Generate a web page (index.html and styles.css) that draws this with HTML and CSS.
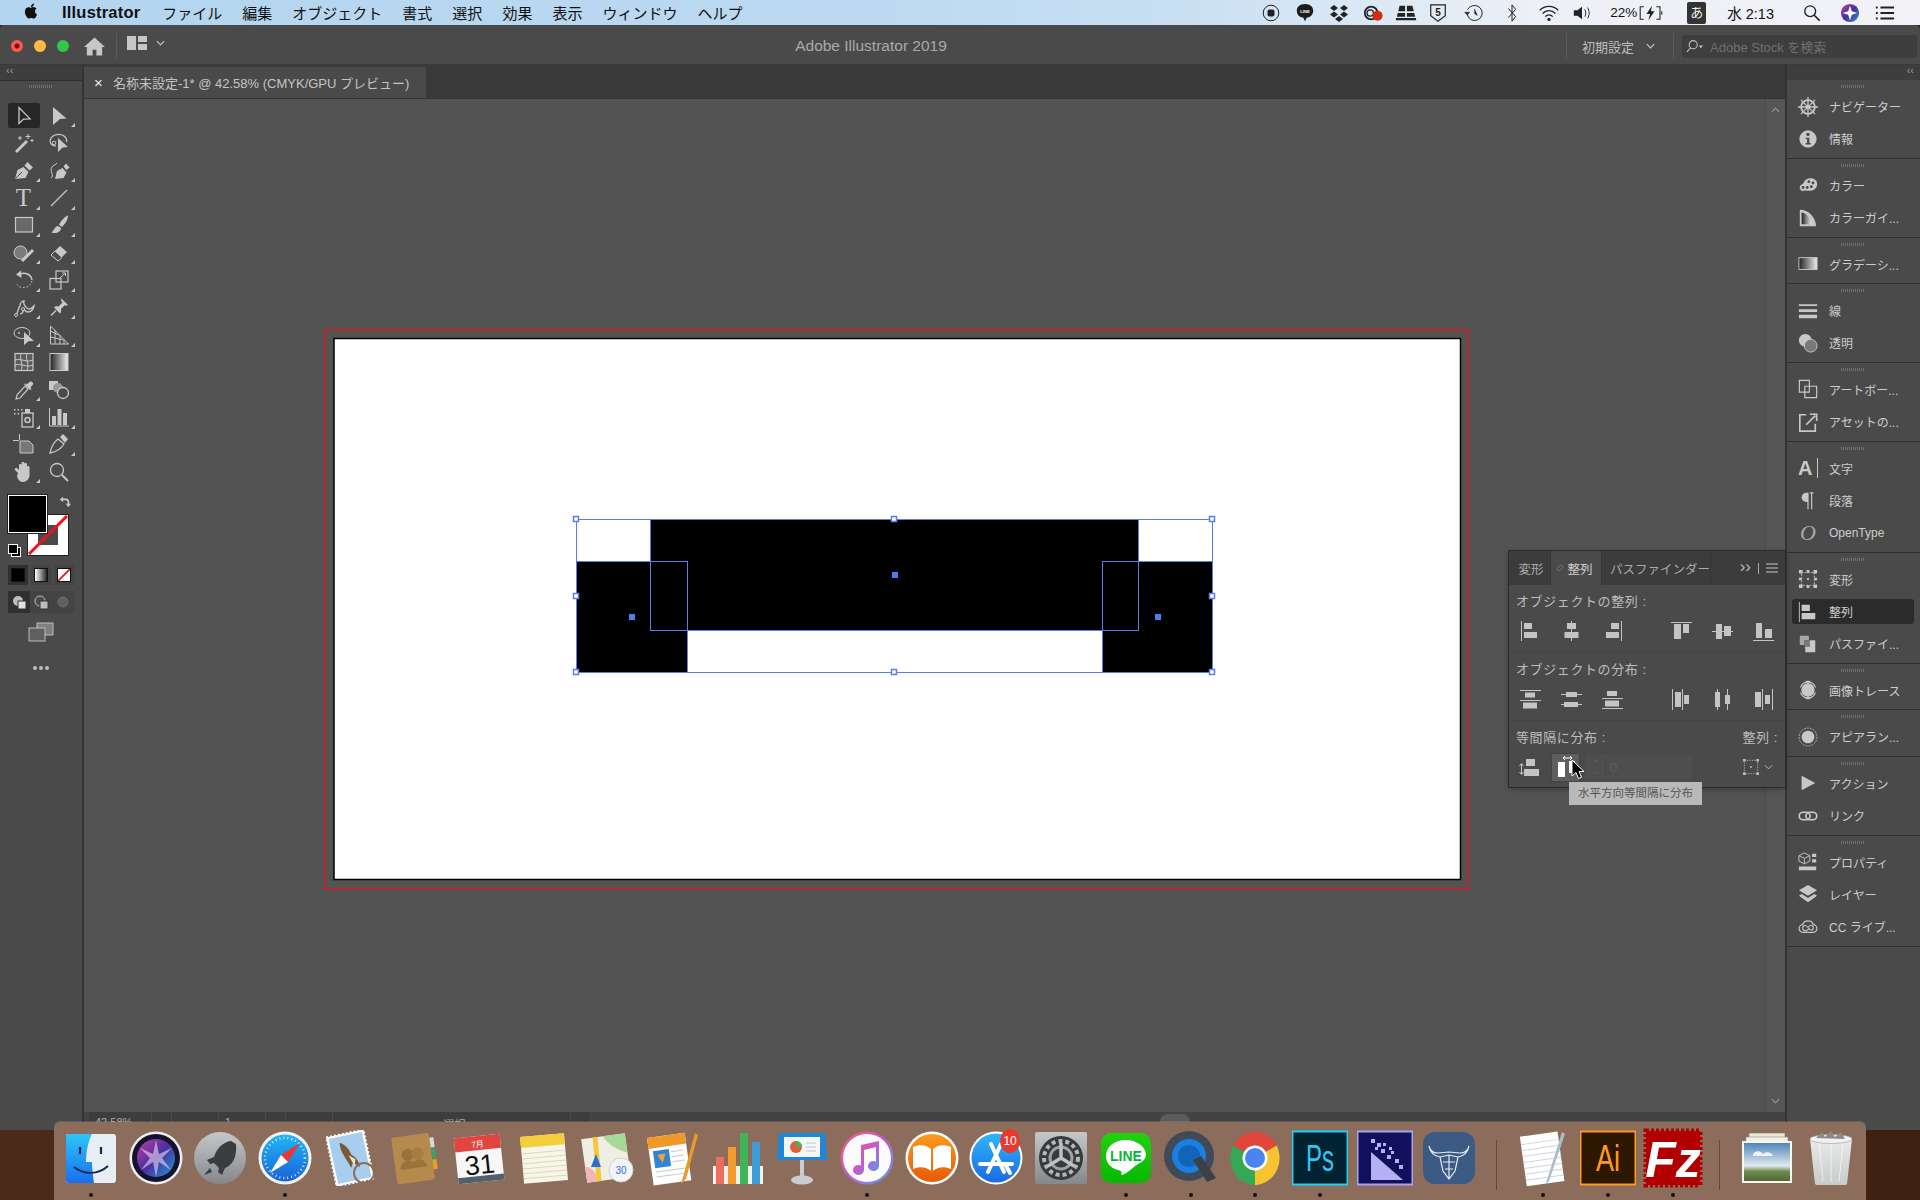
FILE: index.html
```html
<!DOCTYPE html>
<html lang="ja">
<head>
<meta charset="utf-8">
<title>Adobe Illustrator 2019</title>
<link rel="stylesheet" href="styles.css">
</head>
<body>
<svg class="defs" aria-hidden="true">
<defs>
<linearGradient id="gBW" x1="0" x2="1" y1="0" y2="0"><stop offset="0" stop-color="#222"/><stop offset="1" stop-color="#eee"/></linearGradient>
<linearGradient id="gWB" x1="0" x2="1" y1="0" y2="0"><stop offset="0" stop-color="#fff"/><stop offset="1" stop-color="#222"/></linearGradient>
<linearGradient id="gFinder" x1="0" x2="0" y1="0" y2="1"><stop offset="0" stop-color="#2fc4f7"/><stop offset="1" stop-color="#1a6ef0"/></linearGradient>
<linearGradient id="gSafari" x1="0" x2="0" y1="0" y2="1"><stop offset="0" stop-color="#1fb7f5"/><stop offset="1" stop-color="#1a62d8"/></linearGradient>
<linearGradient id="gSiri" x1="0" x2="1" y1="0" y2="1"><stop offset="0" stop-color="#c03ea8"/><stop offset=".5" stop-color="#4a2f9e"/><stop offset="1" stop-color="#1f9bd8"/></linearGradient>
<linearGradient id="gGray" x1="0" x2="0" y1="0" y2="1"><stop offset="0" stop-color="#c6c7c9"/><stop offset="1" stop-color="#85878b"/></linearGradient>
<linearGradient id="gMusic" x1="0" x2="1" y1="0" y2="1"><stop offset="0" stop-color="#fb5c74"/><stop offset=".5" stop-color="#c45ad0"/><stop offset="1" stop-color="#4ca3f5"/></linearGradient>
<linearGradient id="gBooks" x1="0" x2="0" y1="0" y2="1"><stop offset="0" stop-color="#fb9a1d"/><stop offset="1" stop-color="#e85a08"/></linearGradient>
<linearGradient id="gStore" x1="0" x2="0" y1="0" y2="1"><stop offset="0" stop-color="#2fb6f8"/><stop offset="1" stop-color="#1c6ae6"/></linearGradient>
<linearGradient id="gLine" x1="0" x2="0" y1="0" y2="1"><stop offset="0" stop-color="#1fd20e"/><stop offset="1" stop-color="#06b800"/></linearGradient>
<linearGradient id="gSky" x1="0" x2="0" y1="0" y2="1"><stop offset="0" stop-color="#4f86b8"/><stop offset=".6" stop-color="#dfe9ee"/><stop offset=".75" stop-color="#6f8a4c"/><stop offset="1" stop-color="#4e6a34"/></linearGradient>
<linearGradient id="gTrash" x1="0" x2="0" y1="0" y2="1"><stop offset="0" stop-color="#e8eaea"/><stop offset="1" stop-color="#c9cbcb"/></linearGradient>

<symbol id="t-sel" viewBox="0 0 22 22"><path d="M6 2.500v16l4.500-4.400 6.500-.3z" fill="#252525" stroke="#c8c8c8" stroke-width="1.300"/></symbol>
<symbol id="t-dsel" viewBox="0 0 22 22"><path d="M5 2l13.500 11.500-6.500.4L5 20z" fill="#c8c8c8"/></symbol>
<symbol id="t-wand" viewBox="0 0 22 22"><path d="M3 20L14 9" stroke="#c8c8c8" stroke-width="2.800" fill="none"/><path d="M15 2v5M12.500 4.500h5M7 4v4M5 6h4M19 7v3M17.500 8.500h3" stroke="#c8c8c8" fill="none"/></symbol>
<symbol id="t-lasso" viewBox="0 0 22 22"><path d="M8 14C3 14 1 10 2.500 7 4.500 2.500 12 1 16 4c2 1.500 3 4 2.500 6" stroke="#c8c8c8" stroke-width="1.200" fill="none"/><circle cx="6" cy="11" r="1.800" fill="none" stroke="#c8c8c8"/><path d="M10 6l10 9-5.500.4L10 20z" fill="#c8c8c8"/></symbol>
<symbol id="t-pen" viewBox="0 0 22 22"><path d="M2 20l2.500-9 6-3 5 5-3 6zM11.500 6.500l3-3.500 5.500 5.500-3.500 3z" fill="#c8c8c8"/><path d="M2.500 19.500L9 13" stroke="#4a4a4a"/></symbol>
<symbol id="t-curv" viewBox="0 0 22 22"><path d="M7 20l2-8 5.500-3 4 4.500-3 5.500zM15.500 7.500l2.500-3 3.500 4-3 2.500z" fill="#c8c8c8"/><path d="M3 19c4-2-2-7 1-11 1-2 4-2 5-4" stroke="#c8c8c8" fill="none"/></symbol>
<symbol id="t-line" viewBox="0 0 22 22"><path d="M3 19L19 3" stroke="#c8c8c8" stroke-width="1.300"/></symbol>
<symbol id="t-rect" viewBox="0 0 22 22"><rect x="2.500" y="3.500" width="17" height="14.500" fill="#6a6768" stroke="#c8c8c8" stroke-width="1.200"/></symbol>
<symbol id="t-brush" viewBox="0 0 22 22"><path d="M20 1.500c-3 1-7 5-9 9.500l3 2C17 10 20 6 20 1.500zM10 12c-3 0-3.500 4-6.500 6.500C8 20 12.500 18.500 13 14z" fill="#c8c8c8"/></symbol>
<symbol id="t-shaper" viewBox="0 0 22 22"><circle cx="7.500" cy="10.500" r="6.500" fill="#7c7a7a" stroke="#c8c8c8"/><path d="M9 19l11-11" stroke="#c8c8c8" stroke-width="3"/></symbol>
<symbol id="t-eraser" viewBox="0 0 22 22"><path d="M3 13L12 4l7 6-9 9z" fill="#c8c8c8"/><path d="M3 13l4-4 7 6.500-4 3.500z" fill="#4a4a4a" stroke="#c8c8c8"/></symbol>
<symbol id="t-rotate" viewBox="0 0 22 22"><path d="M7 5c5-2 11 0 12 6" stroke="#c8c8c8" stroke-width="1.400" fill="none"/><path d="M8 1.500L3 5.500 8.500 9z" fill="#c8c8c8"/><path d="M19 12c-1 5-7 8-12 6-2-1-3-2-4-4" stroke="#c8c8c8" stroke-dasharray="1.500 2" fill="none"/></symbol>
<symbol id="t-scale" viewBox="0 0 22 22"><rect x="2" y="9.500" width="11" height="10.500" fill="none" stroke="#c8c8c8" stroke-width="1.200"/><rect x="8" y="2" width="12" height="11" fill="none" stroke="#c8c8c8" stroke-width="1.200"/><path d="M12 9l5-4.500M14 4h3.500v3" stroke="#c8c8c8" fill="none"/></symbol>
<symbol id="t-puppet" viewBox="0 0 22 22"><path d="M2 20C6 17 4 13 7 10c0-3 2-5 4-5-1 2 0 3 1 5 1 1 2 3 4 3 2 0 3-1 5-3-1 4-3 6-6 6-2 0-3-1-4-3-1 2-1 5-4 5" fill="none" stroke="#c8c8c8" stroke-width="1.400"/><circle cx="3" cy="19" r="1.500" fill="#4a4a4a" stroke="#c8c8c8"/><circle cx="10" cy="13" r="1.500" fill="#4a4a4a" stroke="#c8c8c8"/></symbol>
<symbol id="t-pin" viewBox="0 0 22 22"><path d="M13 2l7 7-2 1-1-1-4 4c.5 2 0 3.500-1 4.500L6 11.500c1-1 2.500-1.500 4.500-1l4-4-1-1z" fill="#c8c8c8"/><path d="M3 19.500l5-5" stroke="#c8c8c8" stroke-width="1.500"/></symbol>
<symbol id="t-free" viewBox="0 0 22 22"><ellipse cx="9" cy="9" rx="8" ry="5.500" fill="none" stroke="#c8c8c8"/><circle cx="6" cy="9" r=".9" fill="#c8c8c8"/><path d="M11 8l10 9-5.500.3L11 21z" fill="#c8c8c8"/></symbol>
<symbol id="t-persp" viewBox="0 0 22 22"><path d="M2.500 2v18h18M2.500 2l18 18M2.500 7l8 4M2.500 13l13 3M7 6v14M12 11v9M16 16v4" fill="none" stroke="#c8c8c8"/></symbol>
<symbol id="t-mesh" viewBox="0 0 22 22"><rect x="2" y="2.500" width="18" height="17" fill="#5c5c5c" stroke="#c8c8c8" stroke-width="1.200"/><path d="M2 9c6-2 12 3 18 0M2 14c6-2 12 3 18 0M8 2.500c-2 6 3 11 0 17M14 2.500c-2 6 3 11 0 17" fill="none" stroke="#c8c8c8"/></symbol>
<symbol id="t-grad" viewBox="0 0 22 22"><rect x="2" y="2.500" width="18" height="17" fill="url(#gBW)" stroke="#c8c8c8"/></symbol>
<symbol id="t-drop" viewBox="0 0 22 22"><path d="M3 20l1-4 8-9 3 3-8 9z" fill="none" stroke="#c8c8c8" stroke-width="1.200"/><path d="M11 5l6 6 1.500-1.500-1-1 2.500-3c1-2-2-4-3.500-2.500l-3 2.500-1-1z" fill="#c8c8c8"/></symbol>
<symbol id="t-blend" viewBox="0 0 22 22"><rect x="1" y="2" width="9" height="9" fill="#c8c8c8"/><circle cx="10" cy="9" r="5" fill="#999"/><circle cx="15" cy="14" r="5.500" fill="#4a4a4a" stroke="#c8c8c8" stroke-width="1.300"/></symbol>
<symbol id="t-spray" viewBox="0 0 22 22"><path d="M1 3h1.500v1.500H1zM4.500 3H6v1.500H4.500zM8 3h1.500v1.500H8zM1 7h1.500v1.500H1zM4.500 7H6v1.500H4.500z" fill="#c8c8c8"/><rect x="9" y="7" width="11" height="14" fill="none" stroke="#c8c8c8" stroke-width="1.300"/><rect x="12" y="3" width="5" height="4" fill="#c8c8c8"/><circle cx="14.500" cy="14" r="2.500" fill="none" stroke="#c8c8c8" stroke-width="1.500"/></symbol>
<symbol id="t-graph" viewBox="0 0 22 22"><path d="M1.500 2v18H21" stroke="#c8c8c8" fill="none"/><rect x="4" y="10" width="4" height="9" fill="#c8c8c8"/><rect x="9.500" y="3" width="4" height="16" fill="#c8c8c8"/><rect x="15" y="7" width="4" height="12" fill="#c8c8c8"/></symbol>
<symbol id="t-board" viewBox="0 0 22 22"><path d="M7 8h9l4 4v8H7z" fill="#777" stroke="#c8c8c8"/><path d="M0 7.500h6M6.500 1v6" stroke="#c8c8c8"/></symbol>
<symbol id="t-slice" viewBox="0 0 22 22"><path d="M2 20c1-5 4-11 8-14l6 5c-3 5-9 8-14 9z" fill="none" stroke="#c8c8c8" stroke-width="1.300"/><path d="M12 4l3-3 5 5-3 4z" fill="#c8c8c8"/></symbol>
<symbol id="t-hand" viewBox="0 0 22 22"><path d="M5 12L2 9c-1-1 1-3 2-2l2 2V4c0-1.500 2.500-1.500 2.500 0v4-6c0-1.500 3-1.500 3 0v6-5c0-1.500 2.500-1.500 2.500 0v6-3c0-1.500 2.500-1.500 2.500 0v8c0 4-3 7-6.500 7-3 0-5-2-6-6z" fill="#c8c8c8"/></symbol>
<symbol id="t-zoom" viewBox="0 0 22 22"><circle cx="9" cy="9" r="6.500" fill="none" stroke="#c8c8c8" stroke-width="1.300"/><path d="M14 14l6 6" stroke="#c8c8c8" stroke-width="2"/></symbol>

<symbol id="a-l" viewBox="0 0 24 24"><path d="M3.500 2v20" stroke="#c4c4c4"/><path d="M6 4h8v6H6zM6 13h13v6H6z" fill="#c4c4c4"/></symbol>
<symbol id="a-c" viewBox="0 0 24 24"><path d="M12.500 2v20" stroke="#c4c4c4"/><path d="M8 4h9v6H8zM5.500 13h14v6h-14z" fill="#c4c4c4"/></symbol>
<symbol id="a-r" viewBox="0 0 24 24"><path d="M21.500 2v20" stroke="#c4c4c4"/><path d="M11 4h8v6h-8zM6 13h13v6H6z" fill="#c4c4c4"/></symbol>
<symbol id="a-t" viewBox="0 0 24 24"><path d="M2 3.500h21" stroke="#c4c4c4"/><path d="M5 5h7v15H5zM14 5h6v9h-6z" fill="#c4c4c4"/></symbol>
<symbol id="a-m" viewBox="0 0 24 24"><path d="M2 12.500h21" stroke="#c4c4c4"/><path d="M6 5h6v15H6zM14 7h7v10h-7z" fill="#c4c4c4"/></symbol>
<symbol id="a-b" viewBox="0 0 24 24"><path d="M2 21.500h21" stroke="#c4c4c4"/><path d="M5 4h6v15H5zM14 10h7v9h-7z" fill="#c4c4c4"/></symbol>
<symbol id="d-t" viewBox="0 0 24 24"><path d="M2 3.500h21M2 13.500h21" stroke="#c4c4c4"/><path d="M7 5.500h10v5H7zM5 15.500h14v6H5z" fill="#c4c4c4"/></symbol>
<symbol id="d-m" viewBox="0 0 24 24"><path d="M2 7.500h21M2 17.500h21" stroke="#c4c4c4"/><path d="M7 5h11v5H7zM5 15h14v5H5z" fill="#c4c4c4"/></symbol>
<symbol id="d-b" viewBox="0 0 24 24"><path d="M2 11.500h21M2 21.500h21" stroke="#c4c4c4"/><path d="M7 4h10v5H7zM5 13.500h14v6H5z" fill="#c4c4c4"/></symbol>
<symbol id="d-l" viewBox="0 0 24 24"><path d="M3.500 2v21M13.500 2v21" stroke="#c4c4c4"/><path d="M6 5h6v15H6zM15 8h5v9h-5z" fill="#c4c4c4"/></symbol>
<symbol id="d-c" viewBox="0 0 24 24"><path d="M7.500 2v21M17.500 2v21" stroke="#c4c4c4"/><path d="M5 5h5v15H5zM15 8h5v9h-5z" fill="#c4c4c4"/></symbol>
<symbol id="d-r" viewBox="0 0 24 24"><path d="M11.500 2v21M21.500 2v21" stroke="#c4c4c4"/><path d="M4 5h6v15H4zM14 8h5v9h-5z" fill="#c4c4c4"/></symbol>
<symbol id="s-v" viewBox="0 0 24 24"><path d="M3.500 9v10M1.500 11l2-2.500 2 2.500M1.500 17l2 2.500 2-2.500" stroke="#c4c4c4" fill="none"/><path d="M8 4h9v7H8zM6 14h15v7H6z" fill="#c4c4c4"/></symbol>
<symbol id="s-h" viewBox="0 0 24 24"><path d="M9 3h9M11 1l-2 2 2 2M16 1l2 2-2 2" stroke="#fff" fill="none"/><path d="M4 7h7v15H4zM15 6h6v12h-6z" fill="#fff"/></symbol>
<symbol id="g-grid" viewBox="0 0 24 24"><path d="M4 4h16v16H4z" fill="none" stroke="#c4c4c4" stroke-dasharray="1.500 1.500"/><path d="M2.500 2.500h3v3h-3zM18.500 2.500h3v3h-3zM2.500 18.500h3v3h-3zM18.500 18.500h3v3h-3zM11 11h2v2h-2z" fill="#c4c4c4"/></symbol>

<symbol id="p-helm" viewBox="0 0 22 22"><circle cx="11" cy="11" r="7.500" fill="none" stroke="#c8c8c8" stroke-width="2"/><circle cx="11" cy="11" r="2.500" fill="#c8c8c8"/><path d="M11 0v22M0 11h22M3.200 3.200l15.600 15.600M18.800 3.200L3.200 18.800" stroke="#c8c8c8" stroke-width="1.400"/></symbol>
<symbol id="p-info" viewBox="0 0 22 22"><circle cx="11" cy="11" r="9.500" fill="#c8c8c8"/><circle cx="11" cy="6" r="1.800" fill="#4a4a4a"/><path d="M8.500 9.500H12.500v6H14V17H8.500v-1.500H10V11H8.500z" fill="#4a4a4a"/></symbol>
<symbol id="p-pal" viewBox="0 0 24 22"><path d="M2 14c0-3 4-4 5-6 1-3 4-5 8-5 5 0 8 3 8 7 0 5-5 8-10 8-3 0-4-1-6 0-3 1-5-2-5-4z" fill="#c8c8c8"/><circle cx="6" cy="14" r="1.700" fill="#4a4a4a"/><circle cx="11" cy="14" r="1.700" fill="#4a4a4a"/><circle cx="16" cy="13" r="1.700" fill="#4a4a4a"/><circle cx="18" cy="8.500" r="1.700" fill="#4a4a4a"/><circle cx="13" cy="7" r="1.700" fill="#4a4a4a"/></symbol>
<symbol id="p-guide" viewBox="0 0 22 22"><path d="M2 2c10 0 17 8 18 18H2z" fill="#c8c8c8"/><path d="M4 5c6 1 9 5 11 13H4z" fill="url(#gBW)"/></symbol>
<symbol id="p-grad" viewBox="0 0 22 22"><rect x="1" y="4" width="20" height="13" fill="url(#gBW)" stroke="#c8c8c8"/></symbol>
<symbol id="p-stroke" viewBox="0 0 22 22"><path d="M1 3.500h20v2H1zM1 9h20v3H1zM1 15h20v4H1z" fill="#c8c8c8"/></symbol>
<symbol id="p-trans" viewBox="0 0 22 22"><circle cx="8" cy="8" r="7" fill="#c8c8c8"/><circle cx="14" cy="14" r="7" fill="#7a7878" stroke="#c8c8c8"/></symbol>
<symbol id="p-boards" viewBox="0 0 22 22"><path d="M1.500 1.500h11v13h-11zM7.500 8h13v12.500h-13z" fill="#4a4a4a" stroke="#c8c8c8" stroke-width="1.300"/></symbol>
<symbol id="p-asset" viewBox="0 0 22 22"><path d="M9 3H2v18h17v-8" fill="none" stroke="#c8c8c8" stroke-width="1.800"/><path d="M9 14L19 4M13 2.500h7.500V10" fill="none" stroke="#c8c8c8" stroke-width="1.800"/></symbol>
<symbol id="p-para" viewBox="0 0 22 22"><path d="M15 2v18M11 2v18" stroke="#c8c8c8" stroke-width="1.300"/><path d="M11 2H9a5 5 0 000 10h2z" fill="#c8c8c8"/><path d="M13 2h4" stroke="#c8c8c8" stroke-width="1.300"/></symbol>
<symbol id="p-tf" viewBox="0 0 22 22"><rect x="4" y="4" width="14" height="14" fill="none" stroke="#c8c8c8" stroke-dasharray="2 1.500"/><path d="M1 1h4v4H1zM9.500 1h3v3h-3zM17 1h4v4h-4zM1 9.500h3v3H1zM18 9.500h3v3h-3zM1 17h4v4H1zM9.500 18h3v3h-3zM17 17h4v4h-4zM10 10h2v2h-2z" fill="#c8c8c8"/></symbol>
<symbol id="p-al" viewBox="0 0 22 22"><path d="M1.500 0v22" stroke="#c8c8c8"/><path d="M4 3h9v7H4zM4 12h15v7H4z" fill="#c8c8c8"/></symbol>
<symbol id="p-pf" viewBox="0 0 22 22"><path d="M2 2h10v5H7v5H2z" fill="#a6a6a6"/><path d="M7 7h6v7H7z" fill="#7a7a7a"/><path d="M13 7h6v13H8v-6h5z" fill="#c8c8c8"/></symbol>
<symbol id="p-trace" viewBox="0 0 24 24"><circle cx="12" cy="12" r="8" fill="#c8c8c8"/><path d="M3 9a9.500 9.500 0 0118 0M21 15a9.500 9.500 0 01-18 0" fill="none" stroke="#c8c8c8" stroke-width="1.300"/><rect x="9.500" y="1" width="5" height="2.500" fill="#c8c8c8"/><rect x="9.500" y="20.500" width="5" height="2.500" fill="#c8c8c8"/></symbol>
<symbol id="p-app" viewBox="0 0 22 22"><circle cx="11" cy="11" r="7" fill="#c8c8c8"/><circle cx="11" cy="11" r="9.800" fill="none" stroke="#c8c8c8" stroke-dasharray="1.800 1.400"/></symbol>
<symbol id="p-act" viewBox="0 0 22 22"><path d="M4 3l15 8-15 8z" fill="#c8c8c8"/></symbol>
<symbol id="p-link" viewBox="0 0 24 22"><rect x="1.500" y="6.500" width="13" height="9" rx="4.500" fill="none" stroke="#c8c8c8" stroke-width="2"/><rect x="9.500" y="6.500" width="13" height="9" rx="4.500" fill="none" stroke="#c8c8c8" stroke-width="2"/></symbol>
<symbol id="p-prop" viewBox="0 0 22 22"><path d="M7 1l6 3v6l-6 3-6-3V4z" fill="none" stroke="#c8c8c8"/><path d="M1 4l6 3 6-3M7 7v6" stroke="#c8c8c8" fill="none"/><path d="M15.500 2H20v3.500h-4.500zM15.500 8H20v3.500h-4.500zM1 16h19v4H1z" fill="#c8c8c8"/></symbol>
<symbol id="p-layer" viewBox="0 0 22 22"><path d="M11 1l10 6-10 6L1 7z" fill="#c8c8c8"/><path d="M4 11L1 13l10 7 10-7-3-2-7 4.500z" fill="#c8c8c8"/></symbol>
<symbol id="p-cc" viewBox="0 0 26 18"><path d="M7 16a5 5 0 01-1-10c1-3 4-5 7-5s6 2 7 5a5 5 0 01-1 10z" fill="none" stroke="#c8c8c8" stroke-width="1.600"/><path d="M14 11.500c-1.500 2-3 2.500-4.500 2.500a3.500 3.500 0 010-7c2.500 0 5 6 7.500 6a3 3 0 000-6c-2 0-3 1-3.500 2" fill="none" stroke="#c8c8c8" stroke-width="1.400"/></symbol>
</defs>
</svg>

<header class="menubar">
  <svg class="apple" viewBox="0 0 24 24"><path d="M18.710 19.500c-.83 1.240-1.710 2.450-3.050 2.470-1.340.03-1.770-.79-3.290-.79-1.530 0-2 .77-3.270.82-1.310.05-2.300-1.320-3.140-2.530C4.250 17 2.940 12.450 4.700 9.390c.87-1.520 2.430-2.480 4.120-2.510 1.280-.02 2.500.87 3.290.87.78 0 2.260-1.070 3.800-.91.650.03 2.470.26 3.640 1.980-.09.06-2.170 1.280-2.150 3.810.03 3.020 2.650 4.030 2.680 4.040-.03.07-.42 1.440-1.380 2.830M13 3.500c.73-.83 1.940-1.460 2.940-1.500.13 1.170-.34 2.350-1.040 3.190-.69.85-1.830 1.510-2.950 1.420-.15-1.150.41-2.350 1.050-3.110z"/></svg>
  <nav class="menus">
    <b class="appname">Illustrator</b>
    <span>ファイル</span><span>編集</span><span>オブジェクト</span><span>書式</span><span>選択</span><span>効果</span><span>表示</span><span>ウィンドウ</span><span>ヘルプ</span>
  </nav>
  <div class="status">
    <i class="st w34"><svg viewBox="0 0 18 18" class="s18"><circle cx="9" cy="9" r="7.800" fill="none" stroke="#222"/><rect x="5.500" y="5.500" width="7" height="7" rx="2" fill="#222"/></svg></i>
    <i class="st w34"><svg viewBox="0 0 20 22" class="s20"><path d="M10 1C4.500 1 1 4 1 8.500S4.500 16 8 16l2 4 2-4c3.500 0 7-3 7-7.500S15.500 1 10 1z" fill="#1c1c1c"/><text x="10" y="11" class="stline">LINE</text></svg></i>
    <i class="st w34"><svg viewBox="0 0 20 20" class="s20"><path d="M5 2L1 5l4 3 4-3zM15 2l-4 3 4 3 4-3zM5 8.500l-4 3 4 3 4-3zM15 8.500l-4 3 4 3 4-3zM10 13l-4 3 4 3 4-3z" fill="#222"/></svg></i>
    <i class="st w34"><svg viewBox="0 0 22 20" class="s20"><circle cx="9" cy="10" r="7" fill="none" stroke="#222" stroke-width="2"/><circle cx="8" cy="10" r="3.500" fill="none" stroke="#222" stroke-width="1.500"/><circle cx="16" cy="13" r="5.500" fill="#d62a12"/></svg></i>
    <i class="st w32"><svg viewBox="0 0 24 20" class="s22"><path d="M5 2h6v6H3.500zM13 2h6l1.500 6H13zM3 10h8v4H2zM13 10h8l1 4h-9zM1 15.500h22V18H1z" fill="#222"/></svg></i>
    <i class="st w32"><svg viewBox="0 0 20 22" class="s20"><path d="M2 2h16v12l-8 6-8-6z" fill="none" stroke="#222" stroke-width="1.300"/><text x="10" y="14" class="stfive">5</text></svg></i>
    <i class="st w38"><svg viewBox="0 0 24 22" class="s20"><path d="M5 11a9 9 0 109-9C10 2 7 4 5.500 7" fill="none" stroke="#222" stroke-width="1.200"/><path d="M2 10h6l-3 3.500zM14 6v6l3.500 2" fill="#222" stroke="#222" stroke-width=".6"/></svg></i>
    <i class="st w39"><svg viewBox="0 0 14 22" class="s20"><path d="M3 6l8 9-4 5V2l4 5-8 9" fill="none" stroke="#222" stroke-width="1.100"/></svg></i>
    <i class="st w35"><svg viewBox="0 0 24 20" class="s22"><path d="M2 7a14 14 0 0120 0M5 10.500a9.500 9.500 0 0114 0M8 14a5 5 0 018 0" fill="none" stroke="#222" stroke-width="1.500"/><circle cx="12" cy="17" r="1.800" fill="#222"/></svg></i>
    <i class="st w32"><svg viewBox="0 0 22 20" class="s20"><path d="M2 7h4l5-4v14l-5-4H2z" fill="#222"/><path d="M14 6c1.500 2 1.500 6 0 8M17 4c2.500 3 2.500 9 0 12" fill="none" stroke="#222"/></svg></i>
    <span class="pct">22%</span>
    <i class="st w34"><svg viewBox="0 0 28 20" class="bat"><path d="M6 3H2v14h4M20 3h4v14h-4M26 8v4" fill="none" stroke="#222" stroke-width="1.200"/><path d="M15 2L9 11h4l-2 7 7-10h-4z" fill="#222"/></svg></i>
    <span class="ime">あ</span>
    <span class="clock">水 2:13</span>
    <i class="st w39"><svg viewBox="0 0 20 20" class="s18"><circle cx="8" cy="8" r="6" fill="none" stroke="#222" stroke-width="1.500"/><path d="M12.500 12.500L18.500 18.500" stroke="#222" stroke-width="1.800"/></svg></i>
    <i class="st w37"><svg viewBox="0 0 22 22" class="s22"><circle cx="11" cy="11" r="10" fill="url(#gSiri)"/><path d="M11 3l2 6 6 2-6 2-2 6-2-6-6-2 6-2z" fill="#fff"/></svg></i>
    <i class="st w34"><svg viewBox="0 0 22 18" class="s20"><path d="M6 3h15M6 9h15M6 15h15M1 3h2M1 9h2M1 15h2" stroke="#222" stroke-width="2.200"/></svg></i>
  </div>
</header>

<main class="window">
  <div class="titlebar">
    <div class="tb-left">
      <span class="light red"></span><span class="light yellow"></span><span class="light green"></span>
      <svg class="home" viewBox="0 0 22 20"><path d="M11 1L0 11h3v9h6v-6h4v6h6v-9h3z" fill="#c6c6c6"/></svg>
      <span class="vsep"></span>
      <svg class="layout" viewBox="0 0 20 14"><path d="M0 0h9v14H0zM11 0h9v6h-9zM11 8h9v6h-9z" fill="#c6c6c6"/></svg>
      <svg class="chev" viewBox="0 0 10 6"><path d="M1 1l4 4 4-4" fill="none" stroke="#c6c6c6" stroke-width="1.300"/></svg>
    </div>
    <div class="tb-title">Adobe Illustrator 2019</div>
    <div class="tb-right">
      <span class="vsep"></span>
      <span class="ws">初期設定</span>
      <svg class="chev" viewBox="0 0 10 6"><path d="M1 1l4 4 4-4" fill="none" stroke="#c6c6c6" stroke-width="1.300"/></svg>
      <span class="vsep"></span>
      <div class="search">
        <svg viewBox="0 0 20 16" class="srch"><circle cx="8" cy="6" r="4.500" fill="none" stroke="#bdbdbd" stroke-width="1.200"/><path d="M5 9.500L1 14" stroke="#bdbdbd" stroke-width="1.200"/><path d="M14 7h5l-2.500 3z" fill="#bdbdbd"/></svg>
        <span>Adobe Stock を検索</span>
      </div>
    </div>
  </div>

  <div class="workspace">
    <aside class="toolcol">
      <div class="strip">‹‹</div>
      <div class="toolpanel">
        <div class="grip"></div>
        <div class="tools">
          <div class="tool on"><svg><use href="#t-sel"/></svg></div>
          <div class="tool fly"><svg><use href="#t-dsel"/></svg></div>
          <div class="tool"><svg><use href="#t-wand"/></svg></div>
          <div class="tool"><svg><use href="#t-lasso"/></svg></div>
          <div class="tool fly"><svg><use href="#t-pen"/></svg></div>
          <div class="tool fly"><svg><use href="#t-curv"/></svg></div>
          <div class="tool fly tt">T</div>
          <div class="tool fly"><svg><use href="#t-line"/></svg></div>
          <div class="tool fly"><svg><use href="#t-rect"/></svg></div>
          <div class="tool fly"><svg><use href="#t-brush"/></svg></div>
          <div class="tool fly"><svg><use href="#t-shaper"/></svg></div>
          <div class="tool fly"><svg><use href="#t-eraser"/></svg></div>
          <div class="tool fly"><svg><use href="#t-rotate"/></svg></div>
          <div class="tool fly"><svg><use href="#t-scale"/></svg></div>
          <div class="tool fly"><svg><use href="#t-puppet"/></svg></div>
          <div class="tool fly"><svg><use href="#t-pin"/></svg></div>
          <div class="tool fly"><svg><use href="#t-free"/></svg></div>
          <div class="tool fly"><svg><use href="#t-persp"/></svg></div>
          <div class="tool"><svg><use href="#t-mesh"/></svg></div>
          <div class="tool"><svg><use href="#t-grad"/></svg></div>
          <div class="tool fly"><svg><use href="#t-drop"/></svg></div>
          <div class="tool"><svg><use href="#t-blend"/></svg></div>
          <div class="tool fly"><svg><use href="#t-spray"/></svg></div>
          <div class="tool fly"><svg><use href="#t-graph"/></svg></div>
          <div class="tool"><svg><use href="#t-board"/></svg></div>
          <div class="tool fly"><svg><use href="#t-slice"/></svg></div>
          <div class="tool fly"><svg><use href="#t-hand"/></svg></div>
          <div class="tool"><svg><use href="#t-zoom"/></svg></div>
        </div>
        <div class="swatches">
          <div class="fill"></div>
          <div class="stroke"><svg viewBox="0 0 40 40"><path d="M1 39L39 1" stroke="#e8141c" stroke-width="3"/></svg></div>
          <svg class="swap" viewBox="0 0 16 16"><path d="M3 5l4-3v2h3c3 0 4 2 4 4v2h2l-3 4-3-4h2V8c0-1-1-2-2-2H7v2z" fill="#c8c8c8"/></svg>
          <div class="defsw"></div>
        </div>
        <div class="moderow">
          <span class="mode active"><i class="m-fill"></i></span>
          <span class="mode"><i class="m-grad"></i></span>
          <span class="mode"><i class="m-none"><svg viewBox="0 0 14 14"><path d="M0 14L14 0" stroke="#e8141c" stroke-width="2"/></svg></i></span>
        </div>
        <div class="moderow drawrow">
          <span class="mode wide active"><svg viewBox="0 0 16 16"><circle cx="7" cy="7" r="5" fill="#bdbdbd"/><rect x="7" y="7" width="8" height="8" fill="#e0e0e0" stroke="#333"/></svg></span>
          <span class="mode wide"><svg viewBox="0 0 16 16"><circle cx="7" cy="7" r="5" fill="#4a4a4a" stroke="#bdbdbd"/><rect x="7" y="7" width="8" height="8" fill="#bdbdbd" stroke="#333"/></svg></span>
          <span class="mode wide"><svg viewBox="0 0 16 16"><circle cx="8" cy="8" r="5" fill="#5f5f5f" stroke="#6e6e6e"/></svg></span>
        </div>
        <svg class="screen" viewBox="0 0 26 20"><rect x="9" y="1" width="16" height="12" fill="#7f7f7f" stroke="#bdbdbd"/><rect x="1" y="6" width="16" height="13" fill="#5f5f5f" stroke="#bdbdbd"/></svg>
        <div class="more"><i></i><i></i><i></i></div>
      </div>
    </aside>

    <section class="center">
      <div class="tabs">
        <div class="tab"><span class="x">×</span><span>名称未設定-1* @ 42.58% (CMYK/GPU プレビュー)</span></div>
      </div>
      <div class="docarea">
        <div class="canvas">
          <svg class="art" viewBox="84 99 1681 1013" width="1681" height="1013">
            <rect x="325" y="330" width="1143" height="559" fill="none" stroke="#b8262d" stroke-width="2"/>
            <rect x="334" y="338.500" width="1126.500" height="541" fill="#fff" stroke="#000" stroke-width="1.500"/>
            <rect x="650" y="519" width="488" height="111" fill="#000"/>
            <rect x="576" y="561" width="111" height="111" fill="#000"/>
            <rect x="1102" y="561" width="110" height="111" fill="#000"/>
            <g fill="none" stroke="#5a7fe6">
              <rect x="650.500" y="519.500" width="488" height="111"/>
              <rect x="576.500" y="561.500" width="111" height="111"/>
              <rect x="1102.500" y="561.500" width="110" height="111"/>
              <rect x="576.500" y="519.500" width="636" height="153"/>
            </g>
            <g fill="#fff" stroke="#5a7fe6" stroke-width="1.500">
              <rect x="573.500" y="516.500" width="5" height="5"/><rect x="891.500" y="516.500" width="5" height="5"/><rect x="1209.500" y="516.500" width="5" height="5"/>
              <rect x="573.500" y="593.500" width="5" height="5"/><rect x="1209.500" y="593.500" width="5" height="5"/>
              <rect x="573.500" y="669.500" width="5" height="5"/><rect x="891.500" y="669.500" width="5" height="5"/><rect x="1209.500" y="669.500" width="5" height="5"/>
            </g>
            <g fill="#4f7cf0">
              <rect x="629" y="614" width="6" height="6"/><rect x="892" y="572" width="6" height="6"/><rect x="1155" y="614" width="6" height="6"/>
            </g>
          </svg>
        </div>
        <div class="vscroll">
          <svg viewBox="0 0 10 6" class="chev"><path d="M1 5l4-4 4 4" fill="none" stroke="#9a9a9a" stroke-width="1.200"/></svg>
          <svg viewBox="0 0 10 6" class="chev"><path d="M1 1l4 4 4-4" fill="none" stroke="#9a9a9a" stroke-width="1.200"/></svg>
        </div>
      </div>
      <div class="statusbar">
        <span class="sf f-zoom">42.58%</span><span class="sf f-a"></span><span class="sf f-b"></span><span class="sf f-c">1</span><span class="sf f-a"></span><span class="sf f-b"></span>
        <span class="sf f-tool">選択</span><span class="sf f-a"></span>
        <span class="hscroll"><i></i></span>
      </div>
    </section>

    <aside class="dockcol">
      <div class="strip right">‹‹</div>
      <div class="pgroup"><div class="grip"></div>
        <div class="prow"><svg><use href="#p-helm"/></svg><span>ナビゲーター</span></div>
        <div class="prow"><svg><use href="#p-info"/></svg><span>情報</span></div></div>
      <div class="pgroup"><div class="grip"></div>
        <div class="prow"><svg><use href="#p-pal"/></svg><span>カラー</span></div>
        <div class="prow"><svg><use href="#p-guide"/></svg><span>カラーガイ...</span></div></div>
      <div class="pgroup"><div class="grip"></div>
        <div class="prow"><svg><use href="#p-grad"/></svg><span>グラデーシ...</span></div></div>
      <div class="pgroup"><div class="grip"></div>
        <div class="prow"><svg><use href="#p-stroke"/></svg><span>線</span></div>
        <div class="prow"><svg><use href="#p-trans"/></svg><span>透明</span></div></div>
      <div class="pgroup"><div class="grip"></div>
        <div class="prow"><svg><use href="#p-boards"/></svg><span>アートボー...</span></div>
        <div class="prow"><svg><use href="#p-asset"/></svg><span>アセットの...</span></div></div>
      <div class="pgroup"><div class="grip"></div>
        <div class="prow"><b class="glyph-a">A<i></i></b><span>文字</span></div>
        <div class="prow"><svg><use href="#p-para"/></svg><span>段落</span></div>
        <div class="prow"><b class="glyph-o">O</b><span>OpenType</span></div></div>
      <div class="pgroup"><div class="grip"></div>
        <div class="prow"><svg><use href="#p-tf"/></svg><span>変形</span></div>
        <div class="prow sel"><svg><use href="#p-al"/></svg><span>整列</span></div>
        <div class="prow"><svg><use href="#p-pf"/></svg><span>パスファイ...</span></div></div>
      <div class="pgroup"><div class="grip"></div>
        <div class="prow"><svg><use href="#p-trace"/></svg><span>画像トレース</span></div></div>
      <div class="pgroup"><div class="grip"></div>
        <div class="prow"><svg><use href="#p-app"/></svg><span>アピアラン...</span></div></div>
      <div class="pgroup"><div class="grip"></div>
        <div class="prow"><svg><use href="#p-act"/></svg><span>アクション</span></div>
        <div class="prow"><svg><use href="#p-link"/></svg><span>リンク</span></div></div>
      <div class="pgroup"><div class="grip"></div>
        <div class="prow"><svg><use href="#p-prop"/></svg><span>プロパティ</span></div>
        <div class="prow"><svg><use href="#p-layer"/></svg><span>レイヤー</span></div>
        <div class="prow"><svg><use href="#p-cc"/></svg><span>CC ライブ...</span></div></div>
      <div class="pfill"></div>
    </aside>
  </div>

  <div class="float">
    <div class="ftabs">
      <span class="ft t1">変形</span>
      <span class="ft t2"><i class="updown"></i>整列</span>
      <span class="ft t3">パスファインダー</span>
      <span class="fctl">
        <span class="dbl">››</span><span class="bar"></span>
        <svg viewBox="0 0 12 10" class="burger"><path d="M0 1h12M0 5h12M0 9h12" stroke="#c4c4c4" stroke-width="1.100"/></svg>
      </span>
    </div>
    <div class="fsec line">
      <div class="flabel">オブジェクトの整列 :</div>
      <div class="frow">
        <svg><use href="#a-l"/></svg><svg><use href="#a-c"/></svg><svg><use href="#a-r"/></svg>
        <svg class="skip"><use href="#a-t"/></svg><svg><use href="#a-m"/></svg><svg><use href="#a-b"/></svg>
      </div>
    </div>
    <div class="fsec line">
      <div class="flabel">オブジェクトの分布 :</div>
      <div class="frow">
        <svg><use href="#d-t"/></svg><svg><use href="#d-m"/></svg><svg><use href="#d-b"/></svg>
        <svg class="skip"><use href="#d-l"/></svg><svg><use href="#d-c"/></svg><svg><use href="#d-r"/></svg>
      </div>
    </div>
    <div class="fsec">
      <div class="flabel split"><span>等間隔に分布 :</span><span>整列 :</span></div>
      <div class="frow low">
        <svg class="first"><use href="#s-v"/></svg>
        <span class="hoverbtn"><svg><use href="#s-h"/></svg></span>
        <span class="spin"><i class="arrows">⌃<br>⌄</i><b>0</b></span>
        <span class="vdiv"></span>
        <svg class="gridic"><use href="#g-grid"/></svg>
        <svg class="chev" viewBox="0 0 10 6"><path d="M1 1l4 4 4-4" fill="none" stroke="#c4c4c4"/></svg>
      </div>
    </div>
    <div class="tooltip">水平方向等間隔に分布</div>
    <svg class="cursor" viewBox="0 0 14 22"><path d="M1 1v16l4-3.500 2.500 6 3-1.200-2.500-5.800H13z" fill="#000" stroke="#fff"/></svg>
  </div>
</main>

<footer class="dock">
  <div class="di run"><svg viewBox="0 0 56 56"><rect x="3" y="4" width="50" height="49" rx="3" fill="#e7eef4"/><path d="M6 4h23c-4 8-6 18-6 28h6c0 7 1 14 2 21H6a3 3 0 01-3-3V7a3 3 0 013-3z" fill="url(#gFinder)"/><path d="M17 17v7M38 17v7" stroke="#0e2a55" stroke-width="2.200"/><path d="M11 37c10 8 24 8 34-1" fill="none" stroke="#0e2a55" stroke-width="2"/></svg></div>
  <div class="di"><svg viewBox="0 0 56 56"><circle cx="28" cy="28" r="26.500" fill="#eee"/><circle cx="28" cy="28" r="24" fill="#15122e"/><circle cx="28" cy="28" r="19" fill="url(#gSiri)"/><path d="M28 10l3 14 13-6-10 10 9 12-12-8-3 15-3-15-12 8 9-12-10-10 13 6z" fill="#e8d8f4" opacity=".6"/></svg></div>
  <div class="di"><svg viewBox="0 0 56 56"><circle cx="28" cy="28" r="26" fill="url(#gGray)"/><path d="M39 11c-8 1-14 7-17 16l-7 3 3 4 4-1 5 5-1 4 4 3 3-7c8-3 12-11 11-24z" fill="#3a3c40"/><path d="M18 38l-6 7 8-3z" fill="#3a3c40"/></svg></div>
  <div class="di run"><svg viewBox="0 0 56 56"><circle cx="28" cy="28" r="26.500" fill="#f2f2f2"/><circle cx="28" cy="28" r="23.500" fill="url(#gSafari)"/><circle cx="28" cy="28" r="20" fill="none" stroke="#fff" stroke-width="2.500" stroke-dasharray="1 3" opacity=".8"/><path d="M43 13L24 25l7 7z" fill="#f0352e"/><path d="M13 43l11-18 7 7z" fill="#fff"/></svg></div>
  <div class="di"><svg viewBox="0 0 56 56"><g transform="rotate(-12 28 28)"><rect x="9" y="3" width="38" height="50" fill="#fff" stroke="#fff" stroke-width="2" stroke-dasharray="2 2"/><rect x="11" y="5" width="34" height="46" fill="#a9cdee"/><path d="M21 11c5 3 8 8 9 14 4 3 6 8 6 14l-6-6-3 5c-1-5-3-9-4-12-2-5-3-10-2-15z" fill="#7a5a35"/><path d="M27 25l6 5-2 7z" fill="#e9e2d0"/></g><circle cx="42" cy="43" r="10" fill="none" stroke="#8a6f60" stroke-width="2"/></svg></div>
  <div class="di"><svg viewBox="0 0 56 56"><g transform="rotate(-8 28 28)"><rect x="8" y="5" width="38" height="47" rx="3" fill="#b68a4d"/><path d="M46 10h4v10h-4z" fill="#d9d9d9"/><path d="M46 21h4v10h-4z" fill="#35a66a"/><path d="M46 32h4v10h-4z" fill="#e3a51e"/><circle cx="22" cy="24" r="6" fill="#9a733c"/><circle cx="32" cy="24" r="6" fill="#a67d43"/><path d="M13 38c1-6 5-8 9-8s7 2 8 8zM25 38c1-6 4-8 7-8s7 2 8 8z" fill="#9a733c"/></g></svg></div>
  <div class="di"><svg viewBox="0 0 56 56"><g transform="rotate(-6 28 28)"><rect x="5" y="6" width="46" height="46" fill="#f7f7f7"/><path d="M5 6h46v14H5z" fill="#e0453f"/><path d="M5 46h46v6H5z" fill="#53606b"/><text x="28" y="17" class="d-month">7月</text><text x="28" y="44" class="d-date">31</text></g></svg></div>
  <div class="di"><svg viewBox="0 0 56 56"><g transform="rotate(-5 28 28)"><rect x="6" y="5" width="44" height="47" fill="#f8f6e6"/><path d="M6 5h44v11H6z" fill="#f5cf3b"/><path d="M6 22h44M6 27h44M6 32h44M6 37h44M6 42h44M6 47h44" stroke="#d9d7c8"/></g></svg></div>
  <div class="di"><svg viewBox="0 0 56 56"><g transform="rotate(-8 26 28)"><rect x="4" y="6" width="44" height="44" fill="#f0eee2"/><path d="M26 6h22v20C40 22 30 16 26 6z" fill="#a7d99b"/><path d="M4 34c6 0 10 6 12 16H4z" fill="#f6b5b5"/><path d="M18 6l-2 44" stroke="#f5c93b" stroke-width="5"/></g><path d="M16 24l5 13h-10z" fill="#2a6fd8"/><circle cx="41" cy="40" r="12" fill="#f3f4f5" stroke="#cfd3d6"/><text x="41" y="44" class="d-thirty">30</text></svg></div>
  <div class="di"><svg viewBox="0 0 56 56"><g transform="rotate(-8 25 28)"><rect x="5" y="5" width="38" height="48" fill="#fff"/><path d="M5 5h38v11H5z" fill="#ef9a28"/><rect x="9" y="19" width="16" height="17" fill="#2f84d8"/><path d="M13 23h8l-4 9z" fill="#f7a32c"/><path d="M27 22h12M27 27h12M27 32h12M9 40h30M9 45h30" stroke="#c9c9c9"/></g><path d="M50 3L38 47l-2 7 5-5L53 5z" fill="#e89a2a"/></svg></div>
  <div class="di"><svg viewBox="0 0 56 56"><path d="M3 36h50v18H3z" fill="#f1f1ee"/><rect x="6" y="27" width="8" height="27" fill="#ef6d60"/><rect x="18" y="17" width="8" height="37" fill="#f39b2e"/><rect x="30" y="3" width="8" height="51" fill="#3fb55a"/><rect x="42" y="12" width="8" height="42" fill="#3f9ad8"/></svg></div>
  <div class="di"><svg viewBox="0 0 56 56"><path d="M5 3h46l2 27H3z" fill="#1d88d8"/><rect x="10" y="7" width="36" height="20" fill="#f4f6f8"/><circle cx="22" cy="17" r="6" fill="#e0603a"/><path d="M22 17V11a6 6 0 016 6z" fill="#3fb55a"/><path d="M32 13h10M32 17h10M32 21h10" stroke="#bfc6cc"/><path d="M26 30h4v19h-4z" fill="#c9cdd1"/><ellipse cx="28" cy="50" rx="11" ry="4.500" fill="#c9cdd1"/></svg></div>
  <div class="di run"><svg viewBox="0 0 56 56"><circle cx="28" cy="28" r="26.500" fill="url(#gMusic)"/><circle cx="28" cy="28" r="24" fill="#fbfbfb"/><path d="M22 15l18-4v25a5.500 5 0 11-3-4.500V17l-12 3v20a5.500 5 0 11-3-4.500z" fill="url(#gMusic)"/></svg></div>
  <div class="di"><svg viewBox="0 0 56 56"><circle cx="28" cy="28" r="26.500" fill="#fff"/><circle cx="28" cy="28" r="24" fill="url(#gBooks)"/><path d="M9 17c7-3 14-2 18 2v22c-4-4-11-5-18-2zM47 17c-7-3-14-2-18 2v22c4-4 11-5 18-2z" fill="#fff"/></svg></div>
  <div class="di badge"><svg viewBox="0 0 56 56"><circle cx="28" cy="28" r="26.500" fill="#fff"/><circle cx="28" cy="28" r="24.500" fill="url(#gStore)"/><path d="M20 42L33 14M36 42L23 14M12 34h32M37 34l5 9" stroke="#fff" stroke-width="4" stroke-linecap="round" fill="none"/></svg><span class="count">10</span></div>
  <div class="di"><svg viewBox="0 0 56 56"><rect x="2" y="2" width="52" height="52" rx="2" fill="url(#gGray)"/><circle cx="28" cy="28" r="22" fill="#37393b"/><circle cx="28" cy="28" r="17" fill="none" stroke="#b5b7b9" stroke-width="4" stroke-dasharray="4 3"/><circle cx="28" cy="28" r="11" fill="none" stroke="#9ea0a2" stroke-width="3"/><path d="M28 28V13M28 28l13 8M28 28l-13 8" stroke="#bfc1c3" stroke-width="3.500"/></svg></div>
  <div class="di run"><svg viewBox="0 0 56 56"><rect x="3" y="3" width="50" height="50" rx="10" fill="url(#gLine)"/><path d="M28 10c-12 0-20 7-20 16 0 8 6 13 15 15 1 1 0 4 1 4s8-4 13-9c5-3 11-6 11-11 0-8-9-15-20-15z" fill="#fff"/><text x="28" y="31" class="d-line">LINE</text></svg></div>
  <div class="di run"><svg viewBox="0 0 56 56"><circle cx="26" cy="26" r="25" fill="#3f4a58"/><circle cx="26" cy="26" r="17" fill="#1c7fe0"/><circle cx="26" cy="26" r="11" fill="#1364b8"/><path d="M30 30l14 22 9-4-15-22z" fill="#3c3f44"/></svg></div>
  <div class="di run"><svg viewBox="0 0 56 56"><path d="M28 28L6.300 15.500A25 27 0 0149.700 15.500z" fill="#e2453a"/><path d="M28 28l21.700-12.500A25 27 0 0128 55z" fill="#f6c430"/><path d="M28 28v27A25 27 0 016.300 15.500z" fill="#35a853"/><circle cx="28" cy="28" r="12.500" fill="#fff"/><circle cx="28" cy="28" r="10" fill="#4a84ee"/></svg></div>
  <div class="di run"><svg viewBox="0 0 56 56"><rect x="0.500" y="1.500" width="55" height="53" fill="#002231" stroke="#22d0f5" stroke-width="2"/><text x="28" y="41" class="d-ps" textLength="28" lengthAdjust="spacingAndGlyphs">Ps</text></svg></div>
  <div class="di"><svg viewBox="0 0 56 56"><rect x="0.500" y="1.500" width="55" height="53" fill="#10105c" stroke="#a9a3ee" stroke-width="2"/><path d="M14 22l32 28H14z" fill="#b5b0f4"/><path d="M14 9h4v4h-4zM20 13h4v4h-4zM24 19h4v4h-4zM30 25h4v4h-4zM18 17h3v3h-3zM26 13h3v3h-3zM34 21h3v3h-3zM38 29h4v4h-4zM42 35h4v4h-4zM32 17h3v3h-3z" fill="#b5b0f4"/></svg></div>
  <div class="di"><svg viewBox="0 0 56 56"><rect x="2" y="2" width="52" height="52" rx="12" fill="#3b5b85"/><path d="M8 16c1 6 5 10 11 11l9-2 9 2c6-1 10-5 11-11-1 4-4 7-9 7l-11-1-11 1c-5 0-8-3-9-7zM19 27l3 14 6 8 6-8 3-14M22 32h12M24 39h8M28 25v24" fill="none" stroke="#e6ebf2" stroke-width="1.200"/></svg></div>
  <div class="dsep"></div>
  <div class="di run"><svg viewBox="0 0 56 56"><g transform="rotate(-8 26 28)"><rect x="8" y="4" width="38" height="50" fill="#fff"/><path d="M8 12h38M8 18h38M8 24h38M8 30h38M8 36h38M8 42h38M8 48h38" stroke="#cfd3da"/></g><path d="M47 2l-15 48-2 5 4-4L50 4z" fill="#a9bccb"/></svg></div>
  <div class="di run"><svg viewBox="0 0 56 56"><rect x="0.500" y="1.500" width="55" height="53" fill="#2e1700" stroke="#ff9a1e" stroke-width="2"/><text x="28" y="41" class="d-ai" textLength="24" lengthAdjust="spacingAndGlyphs">Ai</text></svg></div>
  <div class="di run"><svg viewBox="0 0 60 60" class="fz"><rect x="3" y="3" width="54" height="54" fill="#b20000" stroke="#b20000" stroke-width="5" stroke-dasharray="3 2"/><text x="30" y="49" class="d-fz">Fz</text></svg></div>
  <div class="dsep"></div>
  <div class="di"><svg viewBox="0 0 56 56"><rect x="10" y="3" width="36" height="12" fill="#ede7d6" stroke="#777" stroke-width=".6"/><rect x="7" y="7" width="42" height="12" fill="#f5f1e6" stroke="#888" stroke-width=".6"/><rect x="3" y="11" width="50" height="42" fill="#f7f7f4"/><rect x="5" y="13" width="46" height="38" fill="url(#gSky)"/><path d="M14 24c3-4 8-3 10 0 3-3 9-2 10 2H14z" fill="#fff" opacity=".8"/></svg></div>
  <div class="di"><svg viewBox="0 0 56 56"><path d="M7 9h42l-5 45a3 3 0 01-3 1H15a3 3 0 01-3-1z" fill="url(#gTrash)"/><ellipse cx="28" cy="9" rx="21" ry="4.500" fill="#f2f2f2" stroke="#999" stroke-width=".6"/><path d="M13 8l6-6 3 5 6-6 4 6 6-5 4 7z" fill="#8e8a86"/><path d="M16 13l4 38M28 14v38M40 13l-4 38" stroke="#fff" opacity=".6"/></svg></div>
</footer>
</body>
</html>
```

FILE: styles.css
```css
* { box-sizing: border-box; }
html, body { margin: 0; padding: 0; }
body {
  position: relative;
  width: 1920px;
  height: 1200px;
  overflow: hidden;
  background: linear-gradient(90deg, #4b2a1a, #3e2012 50%, #3f2114);
  font-family: "Liberation Sans", "Noto Sans CJK JP", sans-serif;
  color: #c8c8c8;
}
.defs { position: absolute; width: 0; height: 0; }
i { font-style: normal; }

/* menu bar */
.menubar {
  display: flex;
  align-items: center;
  height: 25px;
  padding-left: 22px;
  background: linear-gradient(90deg, #b3d5ef 0%, #bcd9f1 45%, #c9e0f3 62%, #edf0f6 80%, #f2f2f7 100%);
  color: #111;
  font-size: 15px;
}
.apple { width: 18px; height: 20px; margin-top: -3px; fill: #111; }
.menus { display: flex; align-items: center; gap: 20px; margin-left: 22px; white-space: nowrap; }
.appname { font-size: 16.500px; letter-spacing: .2px; margin-right: 2px; }
.status { display: flex; align-items: center; margin-left: auto; height: 25px; padding-right: 18px; }
.st { display: flex; justify-content: center; align-items: center; }
.w32 { width: 32px; } .w34 { width: 34px; } .w35 { width: 35px; } .w37 { width: 37px; } .w38 { width: 38px; } .w39 { width: 39px; }
.s18 { width: 18px; height: 18px; }
.s20 { width: 20px; height: 20px; }
.s22 { width: 22px; height: 20px; }
.bat { width: 28px; height: 18px; }
.stline { font: bold 4.500px "Liberation Sans"; fill: #fff; text-anchor: middle; }
.stfive { font: bold 11px "Liberation Sans"; fill: #222; text-anchor: middle; }
.pct { font-size: 13.500px; margin-left: 12px; margin-right: -3px; }
.ime { width: 19px; height: 22px; margin: 0 0 0 19px; background: #333; color: #f2f2f2; font-size: 13px; line-height: 22px; text-align: center; border-radius: 2px; }
.clock { font-size: 14.500px; margin-left: 21px; margin-right: 18px; white-space: nowrap; }

/* window */
.window {
  position: relative;
  width: 1920px;
  height: 1105px;
  display: flex;
  flex-direction: column;
  background: #3a3a3a;
  border-radius: 5px 5px 0 0;
  overflow: visible;
}
.titlebar { display: flex; align-items: center; height: 40px; flex: none; padding-top: 3px; background: #4b4a4a; border-bottom: 1px solid #3a3a3a; border-radius: 5px 5px 0 0; }
.tb-left { display: flex; align-items: center; width: 176px; padding-left: 11px; }
.light { width: 12px; height: 12px; border-radius: 50%; margin-right: 11px; }
.red { background: radial-gradient(circle, #7a1010 0 2px, #fc5753 3px); }
.yellow { background: #fdbc40; }
.green { background: #33c748; }
.home { width: 21px; height: 20px; margin-left: 4px; }
.vsep { width: 1px; height: 26px; background: #5a5a5a; }
.tb-left .vsep { margin-left: 11px; margin-right: 10px; }
.layout { width: 20px; height: 14px; margin-top: -6px; }
.chev { width: 9px; height: 6px; }
.tb-left .chev { margin-left: 9px; margin-top: -6px; }
.tb-title { flex: 1; text-align: center; font-size: 15.500px; color: #a9a9a9; }
.tb-right { display: flex; align-items: center; width: 354px; }
.ws { font-size: 13px; margin-left: 15px; color: #bdbdbd; }
.tb-right .chev { margin-left: 12px; margin-right: 18px; }
.search { display: flex; align-items: center; gap: 6px; width: 235px; height: 23px; margin: 0 0 0 8px; padding-left: 4px; background: #3e3e3e; border-radius: 3px; font-size: 13px; color: #6f6f6f; }
.srch { width: 18px; height: 15px; }

.workspace { flex: 1; display: flex; min-height: 0; }
.toolcol { width: 84px; flex: none; display: flex; flex-direction: column; border-right: 2px solid #333; }
.strip { height: 15px; flex: none; background: #3e3e3e; font-size: 11px; line-height: 11px; padding-left: 6px; color: #9a9a9a; }
.strip.right { text-align: right; padding-right: 6px; }
.toolpanel { flex: 1; background: #4a4a4a; border-top: 1px solid #2f2f2f; padding-top: 21px; position: relative; }
.grip { height: 3px; width: 24px; background: repeating-linear-gradient(90deg, #707070 0 1px, transparent 1px 2px); }
.toolpanel > .grip { position: absolute; top: 4px; left: 29px; }
.tools { display: grid; grid-template-columns: 35px 35px; grid-auto-rows: 27.400px; padding-left: 6px; }
.tool { position: relative; display: flex; align-items: center; justify-content: center; color: #c8c8c8; }
.tool svg { width: 22px; height: 22px; }
.tool.on::before { content: ""; position: absolute; left: 2px; top: 1px; width: 32px; height: 25px; background: #262626; border-radius: 2px; }
.tool.on svg { position: relative; }
.tool.fly::after { content: ""; position: absolute; right: 1px; bottom: 2px; border-style: solid; border-width: 0 0 4px 4px; border-color: transparent transparent #c8c8c8 transparent; }
.tt { font: 25px/1 "Liberation Serif", serif; }
.swatches { position: relative; height: 68px; margin-top: 5px; }
.fill { position: absolute; left: 8px; top: 5px; width: 39px; height: 38px; background: #000; border: 1.500px solid #fff; box-shadow: 0 0 0 1px #222; z-index: 1; }
.stroke { position: absolute; left: 28px; top: 25px; width: 40px; height: 40px; border: 10px solid #fff; background: #4a4a4a; box-shadow: 0 0 0 1px #222; }
.stroke svg { position: absolute; left: -10px; top: -10px; width: 40px; height: 40px; }
.swap { position: absolute; left: 57px; top: 5px; width: 14px; height: 14px; }
.defsw { position: absolute; left: 8px; top: 54px; width: 10px; height: 10px; background: #000; border: 1px solid #fff; box-shadow: 3px 3px 0 -1px #000, 3px 3px 0 0 #fff; }
.moderow { display: flex; gap: 3px; margin: 7px 0 0 8px; }
.mode { width: 20px; height: 20px; display: flex; align-items: center; justify-content: center; background: #444; }
.mode.active { background: #303030; }
.mode i { display: block; width: 14px; height: 14px; border: 1px solid #111; }
.m-fill { background: #000; }
.m-grad { background: linear-gradient(90deg, #fff, #222); }
.m-none { background: #fff; position: relative; }
.m-none svg { display: block; width: 12px; height: 12px; }
.moderow.drawrow { margin-top: 6px; gap: 0; }
.mode.wide { width: 22px; height: 22px; }
.mode.wide svg { width: 16px; height: 16px; }
.screen { display: block; width: 26px; height: 20px; margin: 9px 0 0 28px; }
.more { display: flex; gap: 2px; margin: 24px 0 0 33px; }
.more i { width: 4px; height: 4px; border-radius: 50%; background: #bdbdbd; }

.center { flex: 1; min-width: 0; display: flex; flex-direction: column; position: relative; }
.tabs { height: 34px; flex: none; background: #3a3a3a; padding-top: 2px; border-bottom: 1px solid #333; }
.tab { display: flex; align-items: center; width: 342px; height: 31px; background: #4a4a4a; font-size: 13px; color: #c4c4c4; white-space: nowrap; }
.x { width: 29px; text-align: center; font-size: 15px; color: #eee; }
.docarea { flex: 1; display: flex; min-height: 0; }
.canvas { flex: 1; position: relative; overflow: hidden; background: #535353; }
.art { position: absolute; left: 0; top: 0; }
.vscroll { width: 20px; flex: none; display: flex; flex-direction: column; justify-content: space-between; align-items: center; padding: 8px 0; background: #565656; border-left: 1px solid #4b4b4b; }
.statusbar { display: flex; height: 18px; flex: none; background: #434343; font-size: 11px; color: #aaa; }
.sf { background: #3d3d3d; border-right: 1px solid #4b4b4b; padding: 4px 0 0 6px; white-space: nowrap; }
.f-zoom { width: 63px; margin-left: 5px; }
.f-a { width: 20px; }
.f-b { width: 47px; }
.f-c { width: 47px; }
.f-tool { width: 238px; text-align: center; }
.hscroll { flex: 1; position: relative; }
.hscroll i { position: absolute; left: 569px; top: 2px; width: 30px; height: 16px; background: #5c5c5c; border-radius: 8px 8px 0 0; }

.dockcol { width: 135px; flex: none; display: flex; flex-direction: column; background: #3a3a3a; border-left: 2px solid #333; }
.pgroup { flex: none; position: relative; padding: 10.500px 0 2.700px; background: #4a4a4a; border-bottom: 1px solid #2f2f2f; }
.pgroup .grip { position: absolute; top: 5px; left: 54px; }
.prow { display: flex; align-items: center; height: 32.300px; padding-left: 6px; margin: 0 6px 0 0; font-size: 12px; color: #cdcdcd; white-space: nowrap; position: relative; }
.prow svg { width: 20px; height: 20px; margin: 0 11px 0 5px; flex: none; }
.prow.sel::before { content: ""; position: absolute; left: 5px; right: 0; top: 4px; bottom: 4px; background: #2b2b2b; border-radius: 3px; }
.prow.sel > * { position: relative; }
.glyph-a { display: block; width: 20px; margin: 0 11px 0 5px; font: bold 20px/1 "Liberation Sans"; color: #c8c8c8; position: relative; }
.glyph-a i { position: absolute; right: 0; top: 0; width: 1px; height: 20px; background: #c8c8c8; }
.glyph-o { display: block; width: 20px; margin: 0 11px 0 5px; font: italic 22px/1 "Liberation Serif", serif; color: #a9a9a9; text-align: center; }
.pfill { flex: 1; background: #4a4a4a; }

/* floating panel */
.float {
  position: absolute;
  left: 1509px;
  top: 526px;
  width: 276px;
  height: 236px;
  background: #4a4a4a;
  box-shadow: 0 0 0 1px #2b2b2b, 0 2px 6px rgba(0,0,0,.35);
  font-size: 13px;
  color: #bdbdbd;
}
.ftabs { display: flex; height: 34px; background: #3c3c3c; font-size: 12.500px; }
.ft { display: flex; align-items: center; justify-content: center; color: #aaa; border-right: 1px solid #333; }
.t1 { width: 42px; padding-left: 3px; }
.t2 { width: 51px; padding-right: 2px; background: #4a4a4a; color: #d0d0d0; }
.t3 { width: 109px; justify-content: flex-end; white-space: nowrap; overflow: hidden; }
.updown { width: 6px; height: 10px; margin-right: 4px; border: 1px solid #888; transform: rotate(45deg) scale(.65); }
.fctl { flex: 1; display: flex; align-items: center; justify-content: flex-end; padding-right: 7px; gap: 7px; }
.dbl { font-size: 17px; line-height: 1; margin-top: -3px; }
.bar { width: 1px; height: 11px; background: #aaa; }
.burger { width: 12px; height: 10px; }
.fsec { height: 68px; padding-top: 8px; }
.fsec:last-of-type { height: 66px; }
.fsec.line { border-bottom: 1px solid #444; }
.flabel { height: 18px; line-height: 18px; padding-left: 7px; letter-spacing: .6px; white-space: nowrap; }
.flabel.split { display: flex; justify-content: space-between; padding-right: 7px; }
.frow { display: flex; align-items: center; height: 24px; margin-top: 8px; }
.frow svg { width: 24px; height: 24px; margin: 0 8.500px; flex: none; }
.frow svg.skip { margin-left: 36.500px; }
.hoverbtn { width: 29px; height: 29px; display: flex; align-items: center; justify-content: center; background: #5e5e5e; border: 1px solid #444; border-radius: 2px; margin-left: 1px; flex: none; }
.frow .hoverbtn svg { margin: 0; }
.spin { display: flex; align-items: center; width: 106px; height: 24px; margin-left: 6px; background: #4e4e4e; color: #5f5f5f; font-size: 13px; flex: none; }
.arrows { width: 20px; font-size: 9px; line-height: 8px; text-align: center; border-right: 1px solid #474747; }
.spin b { font-weight: 400; margin-left: 4px; }
.vdiv { width: 1px; height: 60px; margin: -32px 0 0 22px; background: #474747; flex: none; }
.frow svg.gridic { width: 20px; height: 20px; margin: 0 0 0 26px; }
.frow svg.chev { width: 9px; height: 6px; margin: 0 0 0 3px; }
.tooltip { position: absolute; left: 60px; top: 231px; width: 133px; height: 23px; background: #b9b9b9; color: #555; font-size: 11.500px; line-height: 23px; text-align: center; white-space: nowrap; }
.cursor { position: absolute; left: 62px; top: 208px; width: 14px; height: 22px; }

/* dock */
.dock {
  position: absolute;
  left: 54px;
  top: 1122px;
  width: 1812px;
  height: 78px;
  display: flex;
  padding-left: 4.500px;
  background: #8c6d5b;
  border-radius: 6px 6px 0 0;
  box-shadow: 0 -1px 0 rgba(255,255,255,.12);
}
.di { position: relative; width: 64.700px; height: 78px; flex: none; padding-top: 8px; }
.di svg { display: block; width: 56px; height: 56px; margin: 0 auto; }
.di.run::after { content: ""; position: absolute; left: calc(50% - 2px); top: 71px; width: 4px; height: 4px; border-radius: 50%; background: #111; }
.di svg.fz { width: 60px; height: 60px; margin-top: -2px; }
.dsep { width: 29.300px; flex: none; position: relative; }
.dsep::after { content: ""; position: absolute; left: 14px; top: 18px; width: 1px; height: 50px; background: #5f493c; }
.count { position: absolute; left: 36px; top: 7px; width: 20px; height: 24px; border-radius: 50%; background: #e8392f; color: #fff; font-size: 12px; line-height: 24px; text-align: center; }
.d-month { font: 8px "Noto Sans CJK JP"; fill: #fff; text-anchor: middle; }
.d-date { font: 27px "Liberation Sans"; fill: #111; text-anchor: middle; }
.d-thirty { font: 10px "Liberation Sans"; fill: #2a6fd8; text-anchor: middle; }
.d-line { font: bold 14px "Liberation Sans"; fill: #07b53b; text-anchor: middle; }
.d-ps { font: 37px "Liberation Sans"; fill: #31c5f0; text-anchor: middle; }
.d-ai { font: 37px "Liberation Sans"; fill: #ff9a1e; text-anchor: middle; }
.d-fz { font: italic bold 50px "Liberation Sans"; fill: #fff; text-anchor: middle; }
```
